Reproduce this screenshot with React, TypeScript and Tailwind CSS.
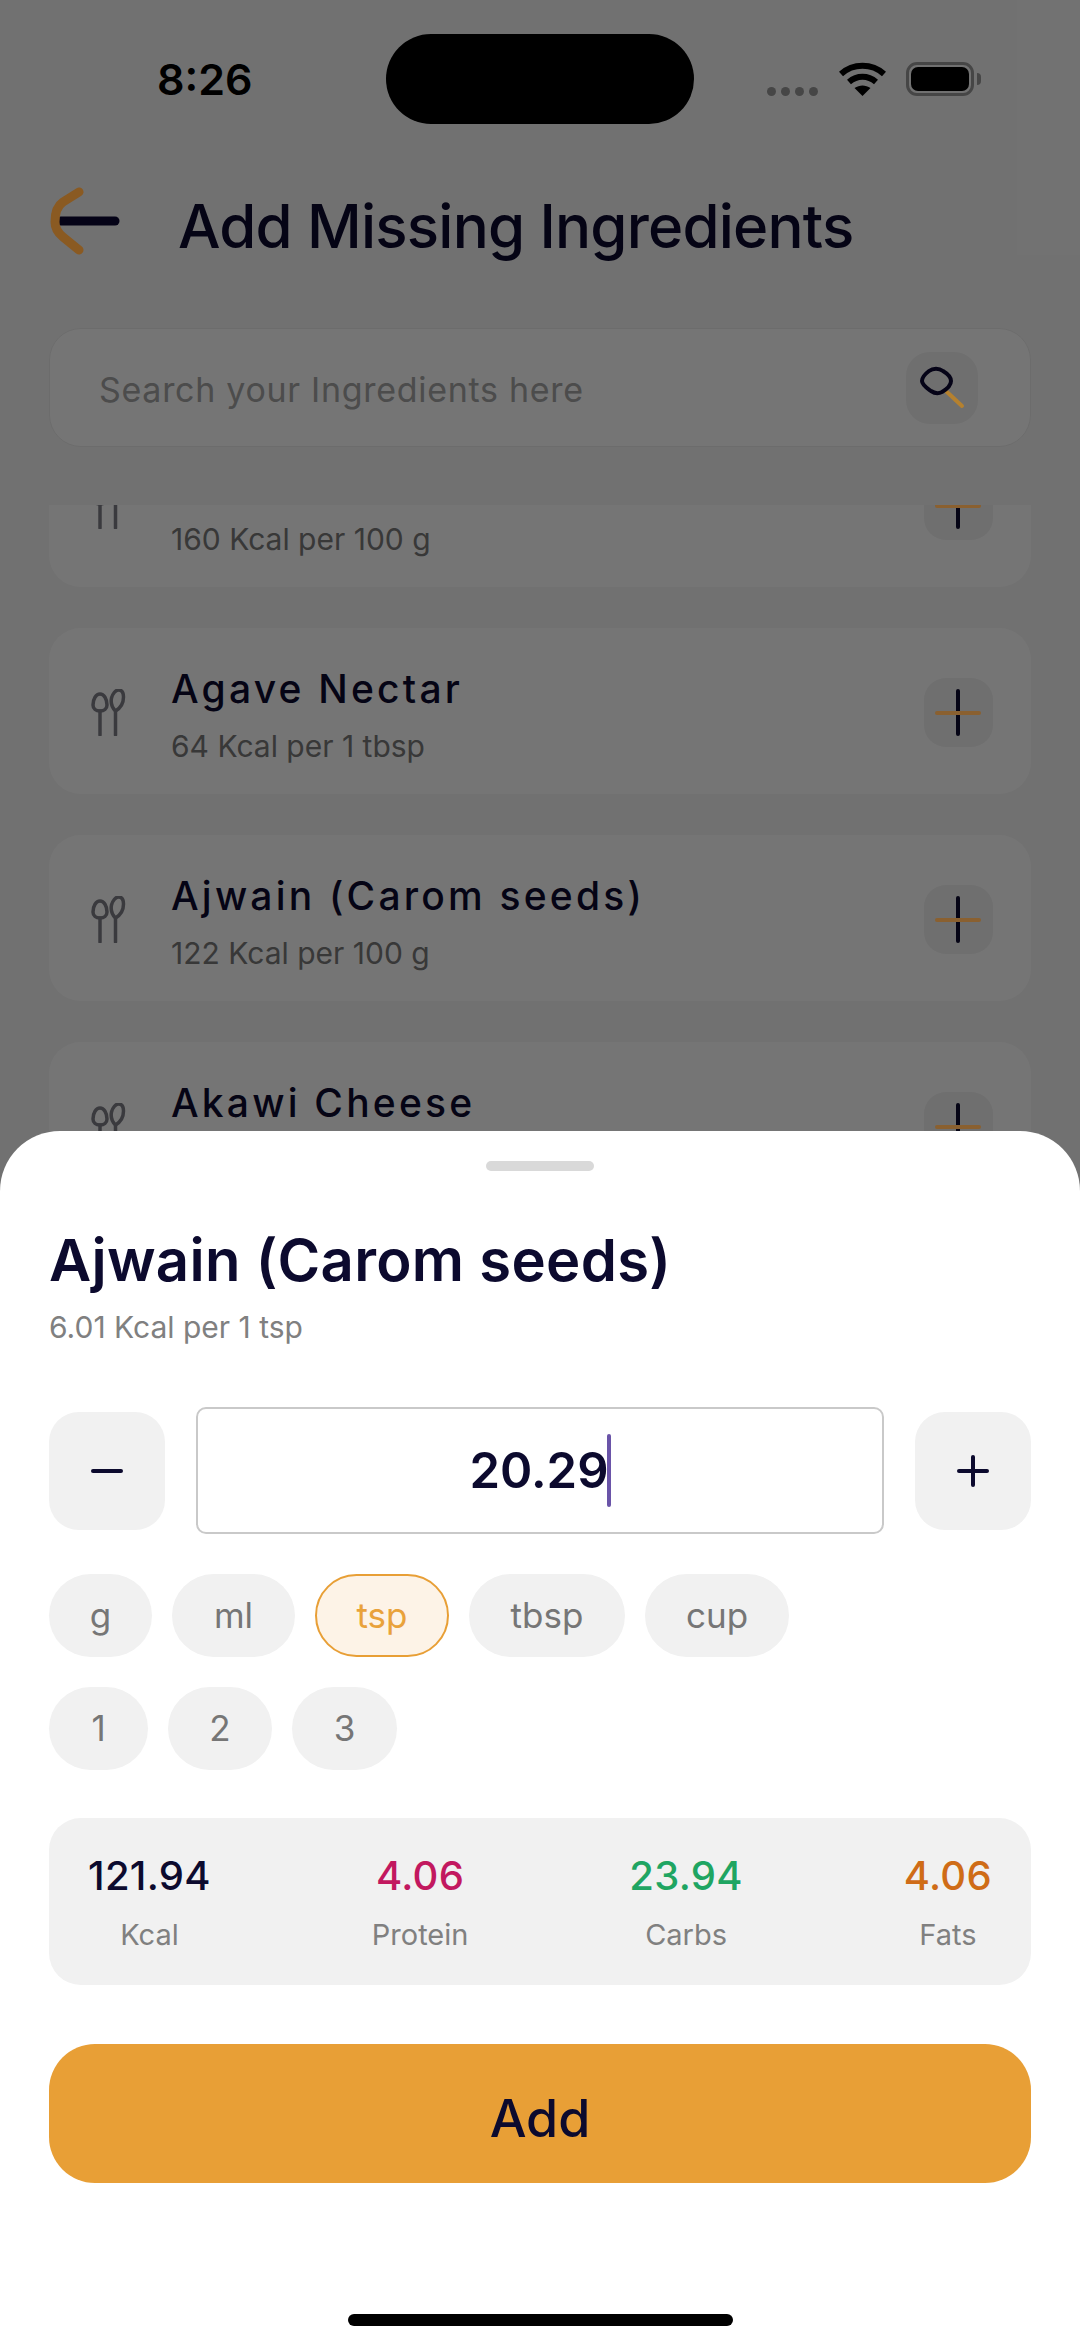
const foods = [
  { name: "", info: "160 Kcal per 100 g" },
  { name: "Agave Nectar", info: "64 Kcal per 1 tbsp" },
  { name: "Ajwain (Carom seeds)", info: "122 Kcal per 100 g" },
  { name: "Akawi Cheese", info: "" },
];

const stats = [
  { value: "121.94", label: "Kcal", color: "text-[#0c0a2e]" },
  { value: "4.06", label: "Protein", color: "text-[#c2185f]" },
  { value: "23.94", label: "Carbs", color: "text-[#1fa562]" },
  { value: "4.06", label: "Fats", color: "text-[#cf6c17]" },
];

const units = [
  { label: "g", width: "w-[103px]" },
  { label: "ml", width: "w-[123px]" },
  { label: "tsp", width: "w-[134px]", active: true },
  { label: "tbsp", width: "w-[156px]" },
  { label: "cup", width: "w-[144px]" },
];

const amounts = [
  { label: "1", width: "w-[99px]" },
  { label: "2", width: "w-[104px]" },
  { label: "3", width: "w-[105px]" },
];

function SpoonIcon() {
  return (
    <svg width="40" height="47" viewBox="0 0 40 47" fill="none" stroke="#7f7f88" strokeWidth="3.500" strokeLinecap="round">
      <path d="M9 22v24" />
      <path d="M9 22c-4 0-7-2-7-6 0-6 3-11 7-11s7 5 7 11c0 4-3 6-7 6z" />
      <path d="M24.500 22v24" />
      <path d="M24.500 22c-3-3-5-8-4-13 1-4 4-8 7-8 4 0 5 3 5 7 0 6-3 11-8 14z" />
    </svg>
  );
}

function FoodCard({ name, info, first }: { name: string; info: string; first?: boolean }) {
  return (
    <div className={`h-[166px] shrink-0 rounded-[32px] bg-white flex items-center pl-[42px] pr-[38px] ${first ? "-mt-[84px]" : ""}`}>
      <div className="w-[80px] shrink-0 flex mt-[3px]">
        <SpoonIcon />
      </div>
      <div className="flex-1 mt-[6px]">
        <div className="text-[39px] leading-[48px] font-medium tracking-[3.200px] text-[#0c0a2e] h-[48px]">{name}</div>
        <div className="text-[30px] leading-[36px] text-[#7a7a7a] mt-[15px] h-[36px]">{info}</div>
      </div>
      <div className="w-[69px] h-[69px] mt-[3px] rounded-[22px] bg-[#f1f1f1] relative">
        <div className="absolute left-[32px] top-[11px] w-[4px] h-[47px] rounded-full bg-[#0c0a2e]" />
        <div className="absolute z-10 left-[11px] top-[33px] w-[46px] h-[4px] rounded-full bg-[#8a6030]" />
      </div>
    </div>
  );
}

function Chip({ label, width, active }: { label: string; width: string; active?: boolean }) {
  return (
    <div
      className={`h-[83px] rounded-full flex items-center justify-center text-[35px] ${width} ${
        active ? "bg-[#fdf3e7] border-2 border-[#e89f36] text-[#e9a23b]" : "bg-[#f1f1f1] text-[#767676]"
      }`}
    >
      {label}
    </div>
  );
}

export default function App() {
  return (
    <div className="relative w-[1080px] h-[2347px] overflow-hidden bg-[#f7f7f7] font-['Inter',sans-serif]">
      {/* Status bar */}
      <div className="flex h-[124px] pt-[34px]">
        <div className="ml-[157px] w-[229px] text-[43px] leading-[90px] font-semibold text-black">8:26</div>
        <div className="w-[308px] h-[90px] rounded-full bg-black" />
        <div className="ml-[73px] mt-[53px] flex gap-[5px] h-[9px]">
          <div className="w-[9px] h-[9px] rounded-full bg-[#999]" />
          <div className="w-[9px] h-[9px] rounded-full bg-[#999]" />
          <div className="w-[9px] h-[9px] rounded-full bg-[#999]" />
          <div className="w-[9px] h-[9px] rounded-full bg-[#999]" />
        </div>
        <svg className="ml-[21px] mt-[28px]" width="47" height="34" viewBox="0 0 47 34" fill="none" stroke="#000" strokeWidth="6">
          <path d="M2 12C14 1 33 1 45 12" />
          <path d="M10 20c8-7 19-7 27 0" />
          <path d="M23.500 34l-8-8c5-3.500 11-3.500 16 0z" fill="#000" stroke="none" />
        </svg>
        <div className="ml-[20px] mt-[28px] w-[68px] h-[34px] rounded-[11px] border-[3px] border-[#999] p-[2px]">
          <div className="w-full h-full rounded-[7px] bg-black" />
        </div>
        <div className="ml-[3px] mt-[39px] w-[4px] h-[12px] rounded-r-full bg-[#999]" />
      </div>

      {/* Header */}
      <div className="flex items-center h-[100px] mt-[52px] pl-[49px]">
        <svg className="shrink-0 relative z-10" width="72" height="80" viewBox="0 0 72 80" fill="none" strokeLinecap="round">
          <path d="M12 35h54" stroke="#050317" strokeWidth="9" />
          <path d="M30 6L14 16C8 20 6 28 6 36c0 6 3 11 8 15l16 13" stroke="#8a5a22" strokeWidth="9" strokeLinejoin="round" />
        </svg>
        <h1 className="ml-[57px] text-[60px] leading-[72px] font-medium tracking-[-0.800px] text-[#0c0a2e]">Add Missing Ingredients</h1>
      </div>

      {/* Search */}
      <div className="mx-[49px] mt-[52px] h-[119px] rounded-[32px] bg-white border border-[#ececec] flex items-center pl-[49px] pr-[52px]">
        <span className="flex-1 text-[34px] tracking-[0.7px] text-[#a5a5a5] mt-[3px]">Search your Ingredients here</span>
        <div className="w-[72px] h-[72px] rounded-[24px] bg-[#f1f1f1] flex items-center justify-center">
          <svg className="relative z-10" width="50" height="50" viewBox="0 0 50 50" fill="none" strokeLinecap="round">
            <path d="M30 29l15 14" stroke="#b5812f" strokeWidth="4" />
            <path d="M12 8c4-3 10-3 14 0 5 3 8 6 8 10s-4 8-9 11c-4 2-8 1-11-1-4-3-9-6-9-10s3-7 7-10z" stroke="#050317" strokeWidth="4" />
          </svg>
        </div>
      </div>

      {/* Ingredient list, scrolled under the search box */}
      <div className="mt-[58px] mx-[49px] h-[700px] overflow-hidden flex flex-col gap-[41px]">
        {foods.map((f, i) => (
          <FoodCard key={i} name={f.name} info={f.info} first={i === 0} />
        ))}
      </div>

      {/* Dim overlay */}
      <div className="absolute inset-0 bg-black/[.54]" />

      {/* Bottom sheet */}
      <div className="absolute z-20 inset-x-0 bottom-0 h-[1216px] bg-white rounded-t-[60px] px-[49px] pt-[30px]">
        <div className="mx-auto w-[108px] h-[10px] rounded-full bg-[#d9d9d9]" />
        <h2 className="mt-[55px] text-[58px] leading-[68px] font-semibold tracking-[0.3px] text-[#0c0a2e]">Ajwain (Carom seeds)</h2>
        <p className="mt-[15px] text-[30px] leading-[36px] text-[#808080]">6.01 Kcal per 1 tsp</p>

        <div className="mt-[62px] flex items-center gap-[31px]">
          <div className="w-[116px] h-[118px] rounded-[30px] bg-[#f1f1f1] flex items-center justify-center">
            <div className="w-[32px] h-[4px] rounded-full bg-[#0c0a2e]" />
          </div>
          <div className="flex-1 h-[127px] rounded-[10px] border-2 border-[#c9c9c9] flex items-center justify-center">
            <span className="text-[49px] leading-[60px] font-semibold text-[#0c0a2e]">20.29</span>
            <div className="-ml-[2px] w-[4px] h-[73px] rounded-full bg-[#6a54a8]" />
          </div>
          <div className="w-[116px] h-[118px] rounded-[30px] bg-[#f1f1f1] flex items-center justify-center text-[#0c0a2e] relative">
            <div className="w-[32px] h-[4px] rounded-full bg-[#0c0a2e]" />
            <div className="absolute w-[4px] h-[32px] rounded-full bg-[#0c0a2e]" />
          </div>
        </div>

        <div className="mt-[40px] flex gap-[20px]">
          {units.map((u) => (
            <Chip key={u.label} label={u.label} width={u.width} active={u.active} />
          ))}
        </div>
        <div className="mt-[30px] flex gap-[20px]">
          {amounts.map((a) => (
            <Chip key={a.label} label={a.label} width={a.width} />
          ))}
        </div>

        <div className="mt-[48px] h-[167px] rounded-[32px] bg-[#f1f1f1] flex items-center justify-between px-[39px]">
          {stats.map((s) => (
            <div key={s.label} className="flex flex-col items-center mt-[3px]">
              <span className={`text-[40px] leading-[46px] font-medium tracking-[0.3px] ${s.color}`}>{s.value}</span>
              <span className="mt-[18px] text-[29px] leading-[36px] text-[#808080]">{s.label}</span>
            </div>
          ))}
        </div>

        <div className="mt-[59px] h-[139px] pt-[10px] rounded-[46px] bg-[#e89f36] flex items-center justify-center text-[52px] font-medium text-[#0c0a2e]">
          Add
        </div>

        <div className="mt-[131px] mx-auto w-[385px] h-[12px] rounded-full bg-black" />
      </div>
    </div>
  );
}
